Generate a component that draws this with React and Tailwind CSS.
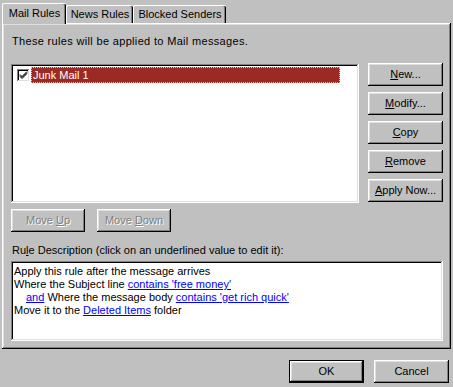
import React from "react";

const raised =
  "shadow-[inset_-1px_-1px_#000000,inset_1px_1px_#ffffff,inset_-2px_-2px_#808080,inset_2px_2px_#dfdfdf]";
const sunken =
  "shadow-[inset_-1px_-1px_#ffffff,inset_1px_1px_#808080,inset_-2px_-2px_#dfdfdf,inset_2px_2px_#000000]";

const Btn = ({ children, w = "w-[75px]", disabled = false, isDefault = false }) => (
  <div
    className={`${w} h-[23px] flex items-center justify-center bg-[#c0c0c0] ${
      isDefault ? "border border-black" : ""
    } ${disabled ? "text-[#808080] [text-shadow:1px_1px_0_#ffffff]" : "text-black"}`}
  >
    <div className={`w-full h-full flex items-center justify-center ${raised}`}>{children}</div>
  </div>
);

const Tab = ({ children, active, w }) =>
  active ? (
    <div
      className={`${w} h-[21px] relative z-10 -mb-[1px] bg-[#c0c0c0] border-t border-l border-white shadow-[inset_-1px_0_#000000,inset_-2px_0_#808080] rounded-t-[2px] flex items-start justify-center pt-[3px]`}
    >
      {children}
    </div>
  ) : (
    <div
      className={`${w} h-[18px] bg-[#c0c0c0] border-t border-l border-white shadow-[inset_-1px_0_#000000,inset_-2px_0_#808080] rounded-t-[2px] flex items-start justify-center pt-[2px]`}
    >
      {children}
    </div>
  );

const Link = ({ children }) => <span className="text-[#0000ff] underline">{children}</span>;

export default function App() {
  return (
    <div
      className="w-[453px] h-[387px] bg-[#c0c0c0] text-[11px] leading-[13px] text-black pt-[2px] pl-[2px] overflow-hidden"
      style={{ fontFamily: '"Liberation Sans", Arial, sans-serif' }}
    >
      <div className="flex items-end h-[21px]">
        <Tab active w="w-[64px]">Mail Rules</Tab>
        <Tab w="w-[67px]">News Rules</Tab>
        <Tab w="w-[93px]">Blocked Senders</Tab>
      </div>

      <div className={`w-[449px] h-[326px] bg-[#c0c0c0] ${raised} pt-[12px] pl-[9px]`}>
        <div className="pl-[1px] tracking-[0.33px]">These rules will be applied to Mail messages.</div>

        <div className="flex mt-[16px]">
          <div className={`w-[348px] h-[139px] bg-white ${sunken} pt-[3px] pl-[6px]`}>
            <div className="flex items-center h-[16px]">
              <div className={`w-[13px] h-[13px] bg-white ${sunken} flex items-center justify-center`}>
                <svg width="9" height="9" viewBox="0 0 9 9">
                  <path d="M1 3.5 L3 5.5 L8 0.5 M1 4.5 L3 6.5 L8 1.5 M1 5.5 L3 7.5 L8 2.5" stroke="#000" strokeWidth="1" fill="none" />
                </svg>
              </div>
              <div className="ml-[1px] w-[309px] h-[16px] bg-[#9b2a25] text-white border border-dotted border-[#7fe6e6] pl-[1px] leading-[14px]">
                Junk Mail 1
              </div>
            </div>
          </div>

          <div className="flex flex-col gap-[6px] ml-[9px] -mt-[1px]">
            <Btn><span><span className="underline">N</span>ew...</span></Btn>
            <Btn><span><span className="underline">M</span>odify...</span></Btn>
            <Btn><span><span className="underline">C</span>opy</span></Btn>
            <Btn><span><span className="underline">R</span>emove</span></Btn>
            <Btn><span><span className="underline">A</span>pply Now...</span></Btn>
          </div>
        </div>

        <div className="flex gap-[12px] mt-[6px]">
          <Btn w="w-[74px]" disabled>
            <span>Move <span className="underline">U</span>p</span>
          </Btn>
          <Btn w="w-[74px]" disabled>
            <span>Move <span className="underline">D</span>own</span>
          </Btn>
        </div>

        <div className="mt-[12px] pl-[1px]">
          Ru<span className="underline">l</span>e Description (click on an underlined value to edit it):
        </div>

        <div className={`mt-[4px] w-[432px] h-[80px] bg-white ${sunken} pt-[4px] pl-[3px]`}>
          <div>Apply this rule after the message arrives</div>
          <div>
            Where the Subject line <Link>contains 'free money'</Link>
          </div>
          <div className="pl-[12px]">
            <Link>and</Link> Where the message body <Link>contains 'get rich quick'</Link>
          </div>
          <div>
            Move it to the <Link>Deleted Items</Link> folder
          </div>
        </div>
      </div>

      <div className="flex justify-end gap-[10px] mt-[11px] pr-[4px]">
        <Btn isDefault w="w-[75px]">OK</Btn>
        <Btn w="w-[75px]">Cancel</Btn>
      </div>
    </div>
  );
}
